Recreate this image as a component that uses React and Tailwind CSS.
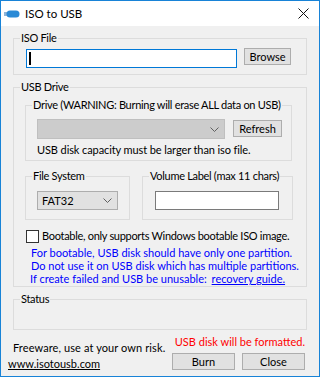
import React from "react";

const font = { fontFamily: 'Lato, "Liberation Sans", sans-serif' };

function Btn({ children, className = "" }) {
  return (
    <div
      className={
        "flex items-center justify-center border border-[#adadad] bg-[#e1e1e1] text-black leading-none whitespace-nowrap " +
        className
      }
    >
      {children}
    </div>
  );
}

function Chevron() {
  return (
    <svg width="9" height="5" viewBox="0 0 9 5" className="shrink-0">
      <polyline points="0.5,0.5 4.5,4.5 8.5,0.5" fill="none" stroke="#606060" strokeWidth="1" />
    </svg>
  );
}

function Group({ label, className = "", children }) {
  return (
    <fieldset className={"border border-[#dcdcdc] min-w-0 " + className}>
      <legend className="ml-[6px] px-[1px] leading-[16px] whitespace-nowrap tracking-[-0.3px]">{label}</legend>
      {children}
    </fieldset>
  );
}

export default function App() {
  return (
    <div
      className="w-[320px] h-[377px] border border-[#1883d7] bg-[#f0f0f0] flex flex-col text-[11px] text-black overflow-hidden whitespace-nowrap"
      style={font}
    >
      {/* Title bar */}
      <div className="h-[25px] bg-white flex items-center shrink-0">
        <svg width="16" height="8" viewBox="0 0 16 8" className="ml-[3px]">
          <rect x="0" y="2" width="3" height="4" fill="#8fb5d8" />
          <rect x="2.5" y="0.5" width="13" height="7" rx="3.5" fill="#2b8ad6" />
        </svg>
        <span className="ml-[5px] text-[11.5px] leading-none">ISO to USB</span>
        <svg width="11" height="11" viewBox="0 0 11 11" className="ml-auto mr-[10px]">
          <path d="M0.5 0.5 L10.5 10.5 M10.5 0.5 L0.5 10.5" stroke="#111" strokeWidth="1" fill="none" />
        </svg>
      </div>

      {/* Body */}
      <div className="px-[12px] pt-[4px] flex flex-col">
        {/* ISO File */}
        <Group label="ISO File" className="pb-[6px]">
          <div className="flex items-start pt-[2px]">
            <div className="ml-[12px] mt-[1px] w-[211px] h-[19px] border border-[#0078d7] bg-white flex items-center">
              <span className="ml-[2px] w-[2px] h-[13px] bg-black" />
            </div>
            <Btn className="ml-[7px] w-[47px] h-[17px]">Browse</Btn>
          </div>
        </Group>

        {/* USB Drive */}
        <Group label="USB Drive" className="mt-[4px] pb-[1px]">
          <div className="pt-[2px] pl-[11px]">
            <Group label="Drive (WARNING: Burning will erase ALL data on USB)" className="w-[267px] pb-[2px]">
              <div className="flex items-start pl-[11px] pt-[6px]">
                <div className="w-[188px] h-[20px] border border-[#bfbfbf] bg-[#cccccc] flex items-center justify-end pr-[5px]">
                  <Chevron />
                </div>
                <Btn className="ml-[8px] mt-[1px] w-[49px] h-[17px]">Refresh</Btn>
              </div>
              <div className="pl-[11px] mt-[3px] leading-[16px] tracking-[-0.1px]">
                USB disk capacity must be larger than iso file.
              </div>
            </Group>
          </div>

          <div className="flex pl-[11px] mt-[7px]">
            <Group label="File System" className="w-[105px] pb-[9px]">
              <div className="pl-[11px] pt-[7px]">
                <div className="w-[81px] h-[19px] border border-[#adadad] bg-[#e1e1e1] flex items-center justify-between pl-[4px] pr-[5px]">
                  <span className="leading-none">FAT32</span>
                  <Chevron />
                </div>
              </div>
            </Group>
            <Group label="Volume Label (max 11 chars)" className="ml-[12px] w-[151px] pb-[9px]">
              <div className="pl-[12px] pt-[7px]">
                <div className="w-[124px] h-[19px] border border-[#7a7a7a] bg-white" />
              </div>
            </Group>
          </div>

          <div className="flex items-center h-[16px] mt-[8px] pl-[12px]">
            <span className="w-[13px] h-[13px] border border-[#333] bg-white shrink-0" />
            <span className="ml-[3px] leading-[16px] tracking-[-0.3px]">Bootable, only supports Windows bootable ISO image.</span>
          </div>
          <div className="pl-[17px] text-[#0000ff] leading-[13px] mt-[2px]">
            <div>For bootable, USB disk should have only one partition.</div>
            <div>Do not use it on USB disk which has multiple partitions.</div>
            <div className="-ml-[1px]">
              If create failed and USB be unusable:{" "}
              <span className="underline ml-[2px]">recovery guide.</span>
            </div>
          </div>
        </Group>

        {/* Status */}
        <Group label="Status" className="mt-[4px]">
          <div className="h-[22px]" />
        </Group>

        {/* Footer */}
        <div className="flex justify-between">
          <div className="flex flex-col mt-[10px] leading-[15px]">
            <span className="tracking-[0.1px]">Freeware, use at your own risk.</span>
            <span className="-ml-[5px] underline mt-[1px]">www.isotousb.com</span>
          </div>
          <div className="flex flex-col items-end mt-[4px] pr-[2px]">
            <span className="text-[#ff0000] leading-[16px]">USB disk will be formatted.</span>
            <div className="flex gap-[7px] mt-[3px]">
              <Btn className="w-[63px] h-[17px]">Burn</Btn>
              <Btn className="w-[63px] h-[17px]">Close</Btn>
            </div>
          </div>
        </div>
      </div>
    </div>
  );
}
